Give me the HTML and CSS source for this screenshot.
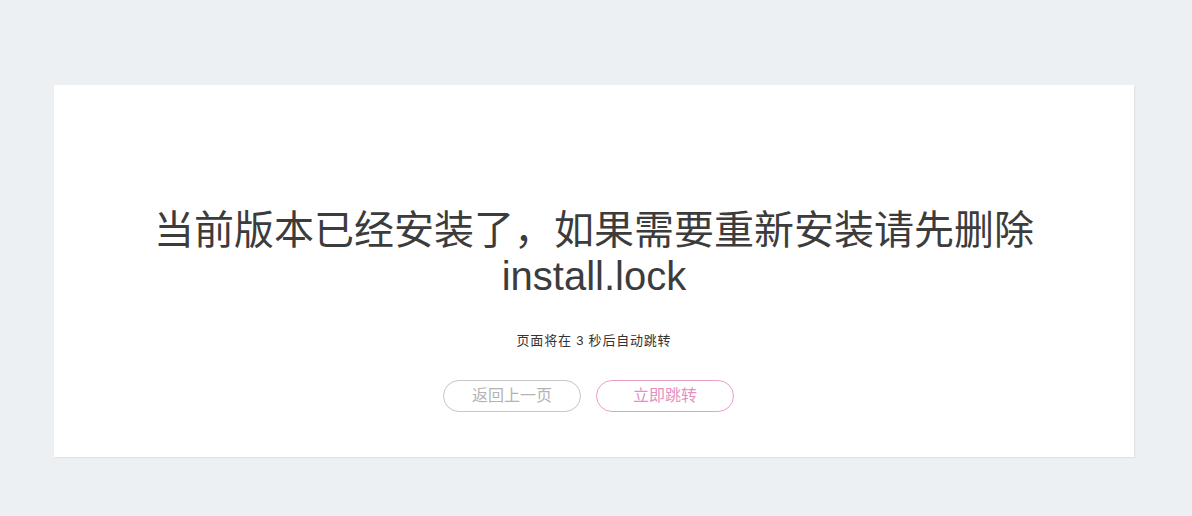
FILE: index.html
```html
<!DOCTYPE html>
<html lang="zh-CN">
<head>
<meta charset="utf-8">
<title>提示</title>
<link rel="stylesheet" href="styles.css">
</head>
<body>
<div class="page">
  <div class="card">
    <h1 class="title">当前版本已经安装了，如果需要重新安装请先删除<br>install.lock</h1>
    <p class="note">页面将在 3 秒后自动跳转</p>
    <div class="actions">
      <a class="btn btn-back" href="#">返回上一页</a>
      <a class="btn btn-go" href="#">立即跳转</a>
    </div>
  </div>
</div>
</body>
</html>
```
FILE: styles.css
```css
html, body {
  margin: 0;
  padding: 0;
  background: #ecf0f3;
  font-family: "Liberation Sans", Arial, "Noto Sans CJK SC", sans-serif;
}
.page {
  padding: 85px 58px 59px 54px;
}
.card {
  background: #fff;
  height: 372px;
  box-sizing: border-box;
  padding-top: 122px;
  box-shadow: 1px 1px 1px #dfe3e7;
  text-align: center;
}
.title {
  margin: 0;
  font-size: 40px;
  line-height: 46px;
  font-weight: normal;
  color: #3c3c3c;
}
.note {
  margin: 32px 0 0;
  font-size: 13px;
  line-height: 20px;
  letter-spacing: 0.8px;
  color: #333;
}
.actions {
  margin-top: 29px;
  padding-right: 11px;
  display: flex;
  justify-content: center;
  gap: 15px;
}
.btn {
  display: block;
  box-sizing: border-box;
  width: 138px;
  height: 32px;
  line-height: 30px;
  border-radius: 16px;
  font-size: 16px;
  text-decoration: none;
}
.btn-back {
  border: 1px solid #c6c6c6;
  color: #b3b3b3;
}
.btn-go {
  border: 1px solid #e9a0cb;
  color: #e68fc1;
}
```
